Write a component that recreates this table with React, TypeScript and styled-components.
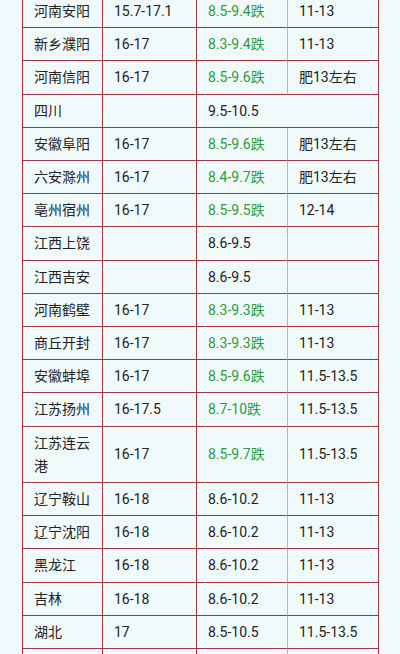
import React from "react";
import styled, { createGlobalStyle } from "styled-components";

type Row = {
  city: string;
  weight?: string;
  price?: string;
  drop?: boolean;
  spanPrice?: boolean;
  fat?: string;
};

const rows: Row[] = [
  { city: "河南安阳", weight: "15.7-17.1", price: "8.5-9.4跌", drop: true, fat: "11-13" },
  { city: "新乡濮阳", weight: "16-17", price: "8.3-9.4跌", drop: true, fat: "11-13" },
  { city: "河南信阳", weight: "16-17", price: "8.5-9.6跌", drop: true, fat: "肥13左右" },
  { city: "四川", price: "9.5-10.5", spanPrice: true },
  { city: "安徽阜阳", weight: "16-17", price: "8.5-9.6跌", drop: true, fat: "肥13左右" },
  { city: "六安滁州", weight: "16-17", price: "8.4-9.7跌", drop: true, fat: "肥13左右" },
  { city: "亳州宿州", weight: "16-17", price: "8.5-9.5跌", drop: true, fat: "12-14" },
  { city: "江西上饶", price: "8.6-9.5" },
  { city: "江西吉安", price: "8.6-9.5" },
  { city: "河南鹤壁", weight: "16-17", price: "8.3-9.3跌", drop: true, fat: "11-13" },
  { city: "商丘开封", weight: "16-17", price: "8.3-9.3跌", drop: true, fat: "11-13" },
  { city: "安徽蚌埠", weight: "16-17", price: "8.5-9.6跌", drop: true, fat: "11.5-13.5" },
  { city: "江苏扬州", weight: "16-17.5", price: "8.7-10跌", drop: true, fat: "11.5-13.5" },
  { city: "江苏连云港", weight: "16-17", price: "8.5-9.7跌", drop: true, fat: "11.5-13.5" },
  { city: "辽宁鞍山", weight: "16-18", price: "8.6-10.2", fat: "11-13" },
  { city: "辽宁沈阳", weight: "16-18", price: "8.6-10.2", fat: "11-13" },
  { city: "黑龙江", weight: "16-18", price: "8.6-10.2", fat: "11-13" },
  { city: "吉林", weight: "16-18", price: "8.6-10.2", fat: "11-13" },
  { city: "湖北", weight: "17", price: "8.5-10.5", fat: "11.5-13.5" },
  // next row only shows its top border at the bottom edge
  { city: "" },
];

const colWidths = [80, 94, 91, 91];

const GlobalStyle = createGlobalStyle`
  html, body {
    margin: 0;
    padding: 0;
    background: #f1fafb;
  }
  body {
    font-family: Roboto, "Noto Sans CJK SC", sans-serif;
    color: #222;
  }
`;

const Page = styled.div`
  height: 654px;
  overflow: hidden;
  padding-left: 22px;
  box-sizing: border-box;
`;

const Table = styled.table`
  margin-top: -6px;
  border-collapse: separate;
  border-spacing: 0;
  table-layout: fixed;
  width: 357px;
  border-top: 1px solid #9b3645;
  border-left: 1px solid #9b3645;
  background: #f1fafb;
`;

const Col = styled.col<{ $w: number }>`
  width: ${(p) => p.$w}px;
`;

const Cell = styled.td<{ $green?: boolean; $soft?: boolean }>`
  padding: 5px 11px 4px;
  font-size: 14px;
  line-height: 23.2px;
  vertical-align: middle;
  color: ${(p) => (p.$green ? "#2f9a3c" : "#222")};
  border-bottom: 1px solid #9b3645;
  border-right: 1px solid ${(p) => (p.$soft ? "#c6aeb1" : "#9b3645")};
  word-break: break-all;
`;

export default function App() {
  return (
    <Page>
      <GlobalStyle />
      <Table>
        <colgroup>
          {colWidths.map((w, i) => (
            <Col key={i} $w={w} />
          ))}
        </colgroup>
        <tbody>
          {rows.map((r, i) => (
            <tr key={i}>
              <Cell>{r.city}</Cell>
              <Cell>{r.weight ?? ""}</Cell>
              {r.spanPrice ? (
                <Cell colSpan={2}>{r.price}</Cell>
              ) : (
                <>
                  <Cell $green={r.drop} $soft>
                    {r.price ?? ""}
                  </Cell>
                  <Cell>{r.fat ?? ""}</Cell>
                </>
              )}
            </tr>
          ))}
        </tbody>
      </Table>
    </Page>
  );
}
